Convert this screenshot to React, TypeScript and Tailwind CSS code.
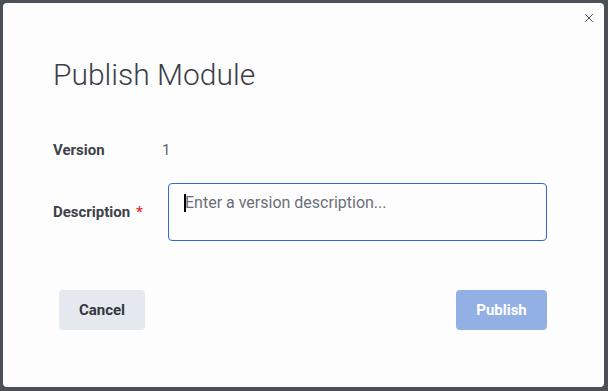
import { X } from "lucide-react";

export default function App() {
  return (
    <div
      className="w-[608px] h-[391px] bg-[#4b5057] p-[3px] pb-[4px] pr-[4px]"
      style={{ fontFamily: "Roboto, 'Liberation Sans', sans-serif" }}
    >
      <div className="relative h-full w-full rounded-[4px] bg-[#fdfdfe] pl-[50px] pr-[57px] pt-[52px]">
        <button className="absolute right-[8px] top-[8px] text-[#2b2f36]">
          <X size={14} strokeWidth={1.5} />
        </button>

        <h1 className="text-[30px] font-light leading-[40px] text-[#3b3f46]">Publish Module</h1>

        <div className="mt-[45px] flex items-center text-[15px] leading-[20px]">
          <span className="w-[109px] font-bold text-[#3d4148]">Version</span>
          <span className="text-[15px] text-[#5d6168]">1</span>
        </div>

        <div className="mt-[23px] flex items-center">
          <label className="w-[115px] text-[15px] font-bold text-[#3d4148]">
            Description <span className="ml-[2px] text-[#e5322d]">*</span>
          </label>
          <div className="h-[58px] flex-1 rounded-[4px] border border-[#3467d2] px-[15px] py-[9px]">
            <div className="flex items-center text-[16px] leading-[20px] text-[#6b6f78]">
              <span className="mr-[-1px] h-[18px] w-[2px] bg-black" />
              Enter a version description...
            </div>
          </div>
        </div>

        <div className="mt-[49px] flex justify-between pl-[6px]">
          <button className="h-[40px] w-[86px] rounded-[4px] bg-[#e4e8ef] text-[15px] font-bold text-[#33373e]">
            Cancel
          </button>
          <button className="h-[40px] w-[91px] rounded-[4px] bg-[#93b0e5] text-[15px] font-bold text-white">
            Publish
          </button>
        </div>
      </div>
    </div>
  );
}
